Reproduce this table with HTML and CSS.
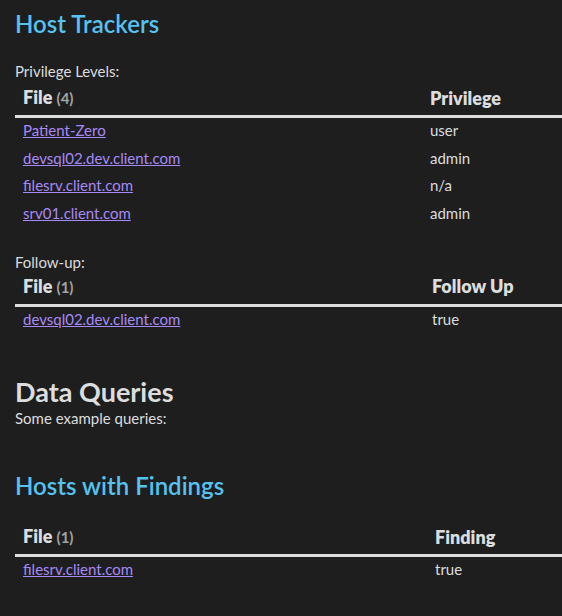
FILE: index.html
```html
<!DOCTYPE html>
<html>
<head>
<meta charset="utf-8">
<link rel="stylesheet" href="styles.css">
</head>
<body>
<h2 class="title blue">Host Trackers</h2>
<p class="label">Privilege Levels:</p>
<table class="dv t1">
  <thead><tr><th class="c1">File <span class="count">(4)</span></th><th>Privilege</th></tr></thead>
  <tbody>
    <tr><td><a href="#">Patient-Zero</a></td><td>user</td></tr>
    <tr><td><a href="#">devsql02.dev.client.com</a></td><td>admin</td></tr>
    <tr><td><a href="#">filesrv.client.com</a></td><td>n/a</td></tr>
    <tr><td><a href="#">srv01.client.com</a></td><td>admin</td></tr>
  </tbody>
</table>
<p class="label">Follow-up:</p>
<table class="dv t2">
  <thead><tr><th class="c1">File <span class="count">(1)</span></th><th>Follow Up</th></tr></thead>
  <tbody>
    <tr><td><a href="#">devsql02.dev.client.com</a></td><td>true</td></tr>
  </tbody>
</table>
<h2 class="big">Data Queries</h2>
<p class="sub">Some example queries:</p>
<h2 class="title blue second">Hosts with Findings</h2>
<table class="dv t3">
  <thead><tr><th class="c1">File <span class="count">(1)</span></th><th>Finding</th></tr></thead>
  <tbody>
    <tr><td><a href="#">filesrv.client.com</a></td><td>true</td></tr>
  </tbody>
</table>
</body>
</html>
```
FILE: styles.css
```css
html, body {
  background: #1e1e1e;
}
body {
  margin: 0;
  padding: 10px 0 0 15px;
  color: #dcddde;
  font-family: "Segoe UI", Lato, "Noto Sans", sans-serif;
  font-size: 15px;
  line-height: 20px;
  overflow: hidden;
}
.title {
  margin: 0;
  font-size: 24px;
  line-height: 28px;
  font-weight: 600;
}
.blue {
  color: #55c2f0;
}
.second {
  margin-top: 44px;
}
.label {
  margin: 23px 0 0;
}
.dv {
  border-collapse: collapse;
  width: 620px;
  margin-top: 2px;
}
.dv th {
  text-align: left;
  font-size: 18px;
  line-height: 22px;
  font-weight: 800;
  padding: 3px 8px 6px;
  border-bottom: 3px solid #dcddde;
  color: #dcddde;
}
.dv td {
  padding: 2px 8px 5px;
  line-height: 20.67px;
}
.count {
  font-size: 15px;
  color: #a3a3a3;
  font-weight: 700;
}
.t1 .c1 { width: 391px; }
.t2 .c1 { width: 393px; }
.t3 .c1 { width: 396px; }
.t2 { margin-top: 0; }
.t3 { margin-top: 22px; }
.dv a {
  color: #a68af9;
  text-decoration: underline;
}
.big {
  margin: 42px 0 0;
  font-size: 27px;
  line-height: 32px;
  font-weight: 700;
  color: #dcddde;
}
.sub {
  margin: 0;
}
```
